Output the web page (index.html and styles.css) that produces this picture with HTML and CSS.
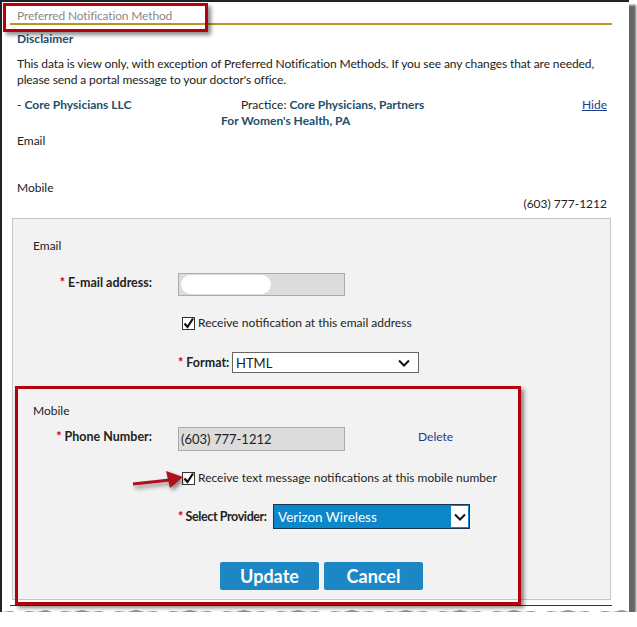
FILE: index.html
```html
<!DOCTYPE html>
<html>
<head>
  <meta charset="UTF-8">
  <title>Preferred Notification Method</title>
  <link rel="stylesheet" href="styles.css">
</head>
<body>
  <div class="sheet">
    <div class="main">
      <div class="title">Preferred Notification Method</div>
      <h3 class="disclaimer">Disclaimer</h3>
      <p class="note">This data is view only, with exception of Preferred Notification Methods. If you see any changes that are needed,<br>please send a portal message to your doctor's office.</p>
      <div class="practice-row">
        <div class="doctor">- <b>Core Physicians LLC</b></div>
        <div class="practice">Practice: <b>Core Physicians, Partners</b><br><b>For Women's Health, PA</b></div>
        <a class="hide" href="#">Hide</a>
      </div>
      <div class="summary">Email</div>
      <div class="summary mobile">
        <div>Mobile</div>
        <div class="phone">(603) 777-1212</div>
      </div>

      <div class="panel">
        <div class="section-title">Email</div>
        <div class="row">
          <label class="label"><span class="req">*</span> E-mail address:</label>
          <div class="field"><span class="blot"></span></div>
        </div>
        <div class="check-row">
          <svg class="check" width="13" height="13" viewBox="0 0 13 13"><rect x="0.5" y="0.5" width="12" height="12" fill="#fff" stroke="#333"/><path d="M2.5 6.5 L5.5 10 L11 1.5" fill="none" stroke="#111" stroke-width="2.2"/></svg>
          <span>Receive notification at this email address</span>
        </div>
        <div class="row inline">
          <label class="inline-label"><span class="req">*</span> Format:</label>
          <div class="select format">
            <span>HTML</span>
            <svg width="12" height="8" viewBox="0 0 12 8"><path d="M1 1.5 L6 6.5 L11 1.5" fill="none" stroke="#111" stroke-width="2"/></svg>
          </div>
        </div>

        <div class="section-title mobile-title">Mobile</div>
        <div class="row phone-row">
          <label class="label"><span class="req">*</span> Phone Number:</label>
          <div class="field">(603) 777-1212</div>
          <a class="delete" href="#">Delete</a>
        </div>
        <div class="check-row">
          <svg class="check" width="13" height="13" viewBox="0 0 13 13"><rect x="0.5" y="0.5" width="12" height="12" fill="#fff" stroke="#333"/><path d="M2.5 6.5 L5.5 10 L11 1.5" fill="none" stroke="#111" stroke-width="2.2"/></svg>
          <span>Receive text message notifications at this mobile number</span>
        </div>
        <div class="row inline provider-row">
          <label class="inline-label provider-label"><span class="req">*</span> Select Provider:</label>
          <div class="select provider">
            <span>Verizon Wireless</span>
            <i class="arrow-box"><svg width="12" height="8" viewBox="0 0 12 8"><path d="M1 1.5 L6 6.5 L11 1.5" fill="none" stroke="#111" stroke-width="2"/></svg></i>
          </div>
        </div>
        <div class="buttons">
          <button class="btn">Update</button>
          <button class="btn">Cancel</button>
        </div>
      </div>
      <div class="rule"></div>
    </div>
    <svg class="torn" width="627" height="8" viewBox="0 0 627 8"><path d="M0 4 L9 3 L17 5 L26 3 L35 4 L44 2 L53 5 L62 3 L71 4 L80 2 L89 4 L98 3 L107 5 L116 3 L125 4 L134 2 L143 4 L152 3 L161 5 L170 3 L179 4 L188 2 L197 4 L206 3 L215 5 L224 3 L233 4 L242 2 L251 4 L260 3 L269 5 L278 3 L287 4 L296 2 L305 4 L314 3 L323 5 L332 3 L341 4 L350 2 L359 4 L368 3 L377 5 L386 3 L395 4 L404 2 L413 4 L422 3 L431 5 L440 3 L449 4 L458 2 L467 4 L476 3 L485 5 L494 3 L503 4 L512 2 L521 4 L530 3 L539 5 L548 3 L557 4 L566 2 L575 4 L584 3 L593 5 L602 3 L611 4 L620 2 L627 4 L627 6 L0 6 Z" fill="#8c8c8c"/></svg>

    <div class="callout callout-title"></div>
    <div class="callout callout-mobile"></div>
    <svg class="pointer" width="60" height="24" viewBox="0 0 60 24"><path d="M3 16 L40 12" stroke="#b0101a" stroke-width="3"/><path d="M36 3 L53 9 L40 20 Z" fill="#b0101a"/></svg>
  </div>
</body>
</html>
```

FILE: styles.css
```css
* {padding: 0; margin: 0;}

body {
  background: #fff;
  font-family: Lato, "Open Sans", sans-serif;
  font-size: 12px;
  color: #222;
}
.sheet {
  position: relative;
  width: 627px;
  height: 610px;
  border-left: 2px solid #222;
  border-top: 2px solid #222;
  background: #fff;
  box-shadow: 7px 5px 2px rgba(0,0,0,.6);
}
.main {
  margin-left: 8px;
  width: 602px;
}
.title {
  padding: 7px 0 0 7px;
  height: 14px;
  line-height: 14px;
  color: #8a8a8a;
  letter-spacing: -0.15px;
  border-bottom: 2px solid #b9961e;
}
.disclaimer {
  margin: 6px 0 0 7px;
  font-size: 12px;
  line-height: 16px;
  color: #1d4e6b;
}
.note {
  margin: 9px 5px 0 7px;
  line-height: 16px;
  letter-spacing: -0.1px;
}
.practice-row {
  display: flex;
  margin: 9px 5px 0 7px;
  line-height: 16px;
}
.practice-row b {
  color: #1d4e6b;
}
.doctor {
  width: 204px;
}
.practice {
  flex: 1;
  text-indent: 20px;
}
.hide {
  color: #1d3c8c;
}
.summary {
  margin: 4px 5px 0 7px;
  line-height: 16px;
}
.summary.mobile {
  margin-top: 31px;
}
.summary .phone {
  text-align: right;
}
.panel {
  margin: 6px 1px 0 2px;
  height: 382px;
  box-sizing: border-box;
  border: 1px solid #c6c6c6;
  background: #f2f2f2;
}
.section-title {
  margin: 19px 0 0 20px;
  line-height: 16px;
}
.section-title.mobile-title {
  margin-top: 30px;
}
.row {
  display: flex;
  align-items: flex-start;
  margin-top: 19px;
}
.row .label {
  width: 139px;
  margin-right: 26px;
  padding-top: 2px;
  line-height: 16px;
  text-align: right;
  font-size: 12.5px;
  font-weight: bold;
}
.req {
  color: #c0001a;
}
.field {
  position: relative;
  width: 167px;
  height: 23px;
  padding-left: 2px;
  box-sizing: border-box;
  border: 1px solid #aaa;
  background: #dcdcdc;
  font-size: 13px;
  line-height: 22px;
}
.field .blot {
  position: absolute;
  left: 2px;
  top: 1px;
  width: 90px;
  height: 19px;
  border-radius: 10px;
  background: #fff;
}
.check-row {
  display: flex;
  align-items: center;
  margin-top: 19px;
  padding-left: 169px;
  line-height: 16px;
}
.check-row .check {
  margin-right: 3px;
}
.row.inline {
  align-items: center;
  margin-top: 21px;
  padding-left: 165px;
}
.inline-label {
  width: 54px;
  font-size: 12.5px;
  font-weight: bold;
}
.select {
  display: flex;
  align-items: center;
  justify-content: space-between;
  box-sizing: border-box;
  font-size: 13px;
}
.select.format {
  width: 187px;
  height: 21px;
  padding: 0 8px 0 3px;
  border: 1px solid #666;
  background: #fff;
}
.phone-row {
  margin-top: 8px;
}
.phone-row .field {
  height: 24px;
  line-height: 23px;
}
.delete {
  margin: 2px 0 0 73px;
  line-height: 16px;
  color: #1d3c8c;
  text-decoration: none;
}
.row.provider-row {
  margin-top: 18px;
}
.provider-label {
  width: 95px;
  letter-spacing: -0.4px;
}
.select.provider {
  width: 197px;
  height: 25px;
  padding: 1px;
  border: 1px solid #1b3450;
  background: #0c87c9;
  color: #fff;
  font-size: 13.5px;
}
.select.provider span {
  padding-left: 3px;
}
.arrow-box {
  display: flex;
  align-items: center;
  justify-content: center;
  width: 17px;
  height: 100%;
  background: #fff;
}
.buttons {
  display: flex;
  gap: 5px;
  margin-top: 33px;
  padding-left: 207px;
}
.btn {
  width: 99px;
  height: 28px;
  border: 0;
  border-radius: 2px;
  background: #1d87c6;
  color: #fff;
  font-family: Lato, "Open Sans", sans-serif;
  font-size: 18px;
  font-weight: bold;
}
.rule {
  margin-top: 5px;
  border-top: 1px solid #333;
}
.torn {
  display: block;
  margin-top: 2px;
}
.callout {
  position: absolute;
  border: 3px solid #b3000e;
  box-shadow: 3px 3px 4px rgba(0,0,0,.45);
}
.callout-title {
  left: 1px;
  top: 1px;
  width: 199px;
  height: 23px;
}
.callout-mobile {
  left: 13px;
  top: 384px;
  width: 500px;
  height: 213px;
}
.pointer {
  position: absolute;
  left: 128px;
  top: 466px;
  filter: drop-shadow(2px 3px 2px rgba(0,0,0,.45));
}
```
